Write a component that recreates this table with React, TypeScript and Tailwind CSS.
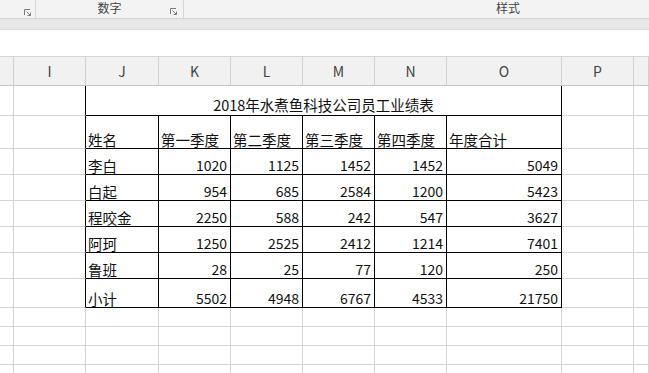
import type { ReactNode } from "react";

const cols = "grid grid-cols-[14px_72px_73px_72px_72px_72px_72px_115px_72px_1fr]";
const font = { fontFamily: '"Noto Sans CJK SC", "Liberation Sans", sans-serif' };

const people: [string, number, number, number, number, number][] = [
  ["李白", 1020, 1125, 1452, 1452, 5049],
  ["白起", 954, 685, 2584, 1200, 5423],
  ["程咬金", 2250, 588, 242, 547, 3627],
  ["阿珂", 1250, 2525, 2412, 1214, 7401],
  ["鲁班", 28, 25, 77, 120, 250],
];

const Launcher = () => (
  <svg width="9" height="9" viewBox="0 0 9 9" className="text-[#7a7a7a]">
    <path d="M1.5 7V1.5H7" fill="none" stroke="currentColor" strokeWidth="1" />
    <path d="M3.5 3.5L7.5 7.5M7.5 4.5v3h-3" fill="none" stroke="currentColor" strokeWidth="1" />
  </svg>
);

const Gray = ({ black = false }: { black?: boolean }) => (
  <div className={`border-b border-r border-b-[#d4d4d4] ${black ? "border-r-black" : "border-r-[#d4d4d4]"}`} />
);

const SheetRow = ({ h, children, blank = false }: { h: string; children?: ReactNode; blank?: boolean }) => (
  <div className={`${cols} ${h}`}>
    <Gray />
    <Gray black={!blank} />
    {blank ? (
      <>
        <Gray />
        <Gray />
        <Gray />
        <Gray />
        <Gray />
        <Gray />
      </>
    ) : (
      children
    )}
    <Gray />
    <Gray />
  </div>
);

const Cell = ({ children, num = false }: { children?: ReactNode; num?: boolean }) => (
  <div
    className={`flex items-end whitespace-nowrap border-b border-r border-black leading-[17px] text-[#111] ${
      num ? "justify-end pr-[3px] text-[14px]" : "pl-[2px] text-[14.5px]"
    }`}
  >
    {children}
  </div>
);

const DataRow = ({ h, cells }: { h: string; cells: (string | number)[] }) => (
  <SheetRow h={h}>
    {cells.map((c, i) => (
      <Cell key={i} num={typeof c === "number"}>
        {c}
      </Cell>
    ))}
  </SheetRow>
);

export default function App() {
  const letters = ["", "I", "J", "K", "L", "M", "N", "O", "P", ""];
  return (
    <div className="w-[649px] h-[373px] overflow-hidden bg-white" style={font}>
      {/* ribbon group labels */}
      <div className="flex h-[18px] bg-[#f3f3f3] text-[12px] leading-[14px] text-[#444]">
        <div className="flex w-[36px] shrink-0 items-center justify-end border-r border-[#d6d6d6] pr-[3px] pt-[6px]">
          <Launcher />
        </div>
        <div className="relative flex w-[148px] shrink-0 justify-center border-r border-[#d6d6d6]">
          <span className="pt-[1px]">数字</span>
          <div className="absolute right-[5px] top-[7px]">
            <Launcher />
          </div>
        </div>
        <div className="flex w-[648px] shrink-0 justify-center">
          <span className="pt-[1px]">样式</span>
        </div>
      </div>
      <div className="h-[12px] border-y border-t-[#d2d2d2] border-b-[#dcdcdc] bg-[#e8e8e8]" />
      <div className="h-[27px] border-b border-[#d5d5d5] bg-white" />
      {/* column headers */}
      <div className={`${cols} h-[29px] border-b border-[#c6c6c6] bg-[#f1f1f1]`}>
        {letters.map((l, i) => (
          <div
            key={i}
            className="flex items-center justify-center border-r border-[#d0d0d0] text-[14px] text-[#444]"
          >
            {l}
          </div>
        ))}
      </div>
      {/* table */}
      <SheetRow h="h-[30px]">
        <div className="col-span-6 flex items-end justify-center border-b border-r border-black pb-[2px] text-[14.5px] leading-[17px] text-[#111]">
          2018年水煮鱼科技公司员工业绩表
        </div>
      </SheetRow>
      <DataRow h="h-[33px]" cells={["姓名", "第一季度", "第二季度", "第三季度", "第四季度", "年度合计"]} />
      {people.map((p) => (
        <DataRow key={p[0]} h="h-[26px]" cells={p} />
      ))}
      <DataRow h="h-[29px]" cells={["小计", 5502, 4948, 6767, 4533, 21750]} />
      <SheetRow h="h-[19px]" blank />
      <SheetRow h="h-[19px]" blank />
      <SheetRow h="h-[19px]" blank />
      <SheetRow h="h-[19px]" blank />
    </div>
  );
}
